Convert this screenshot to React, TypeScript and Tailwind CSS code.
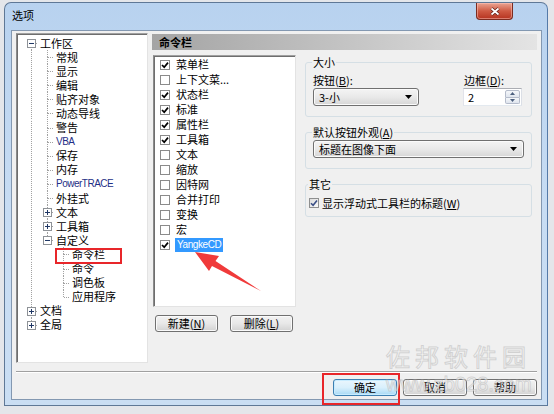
import React from "react";

type TreeRow = {
  label: string;
  rails: boolean[];
  up: boolean;
  down: boolean;
  box?: "plus" | "minus";
  latin?: boolean;
};

const leaf = (label: string, latin = false): TreeRow => ({ label, rails: [true], up: true, down: true, latin });
const sub = (label: string, last = false): TreeRow => ({ label, rails: [true, false], up: true, down: !last });

const treeRows: TreeRow[] = [
  { label: "工作区", rails: [], up: false, down: true, box: "minus" },
  leaf("常规"),
  leaf("显示"),
  leaf("编辑"),
  leaf("贴齐对象"),
  leaf("动态导线"),
  leaf("警告"),
  leaf("VBA", true),
  leaf("保存"),
  leaf("内存"),
  leaf("PowerTRACE", true),
  leaf("外挂式"),
  { label: "文本", rails: [true], up: true, down: true, box: "plus" },
  { label: "工具箱", rails: [true], up: true, down: true, box: "plus" },
  { label: "自定义", rails: [true], up: true, down: false, box: "minus" },
  sub("命令栏"),
  sub("命令"),
  sub("调色板"),
  sub("应用程序", true),
  { label: "文档", rails: [], up: true, down: true, box: "plus" },
  { label: "全局", rails: [], up: true, down: false, box: "plus" },
];

const toolbars: { label: string; on: boolean }[] = [
  { label: "菜单栏", on: true },
  { label: "上下文菜...", on: false },
  { label: "状态栏", on: true },
  { label: "标准", on: true },
  { label: "属性栏", on: true },
  { label: "工具箱", on: true },
  { label: "文本", on: false },
  { label: "缩放", on: false },
  { label: "因特网", on: false },
  { label: "合并打印", on: false },
  { label: "变换", on: false },
  { label: "宏", on: false },
];

const DOT = "#a0a0a0";

// one column of the tree's dotted guide lines
function Rail({ on }: { on: boolean }) {
  return (
    <svg width="16" height="14.1" viewBox="0 0 16 14.1" className="shrink-0">
      {on && <line x1="8.5" y1="0" x2="8.5" y2="14.1" stroke={DOT} strokeDasharray="1 1" />}
    </svg>
  );
}

function Guide({ up, down, box }: { up: boolean; down: boolean; box?: "plus" | "minus" }) {
  return (
    <svg width="16" height="14.1" viewBox="0 0 16 14.1" className="shrink-0">
      {up && <line x1="8.5" y1="0" x2="8.5" y2="7" stroke={DOT} strokeDasharray="1 1" />}
      {down && <line x1="8.5" y1="7" x2="8.5" y2="14.1" stroke={DOT} strokeDasharray="1 1" />}
      <line x1="9" y1="7.5" x2="15" y2="7.5" stroke={DOT} strokeDasharray="1 1" />
      {box && (
        <g>
          <rect x="4.5" y="3.5" width="8" height="8" fill="#fff" stroke="#8e9297" />
          <line x1="6" y1="7.5" x2="11" y2="7.5" stroke="#1d3563" />
          {box === "plus" && <line x1="8.5" y1="5" x2="8.5" y2="10" stroke="#1d3563" />}
        </g>
      )}
    </svg>
  );
}

function Tree() {
  return (
    <div className="w-[132px] h-[330px] shrink-0 bg-white border border-t-[#a0a0a0] border-l-[#8a8a8a] border-r-[#e3e3e3] border-b-[#e3e3e3] shadow-[inset_1px_1px_0_#6e6e6e] pt-[2px] pl-[6px]">
      {treeRows.map((r, i) => (
        <div key={i} className="flex items-center h-[14.1px] leading-[13px]">
          {r.rails.map((on, j) => (
            <Rail key={j} on={on} />
          ))}
          <Guide up={r.up} down={r.down} box={r.box} />
          {r.latin ? (
            <span className="pl-[1px] font-['Liberation_Sans',sans-serif] text-[10px] leading-[12px] tracking-[-0.5px] text-[#1f2f86]">
              {r.label}
            </span>
          ) : (
            <span className="pl-[1px] leading-[13px]">{r.label}</span>
          )}
        </div>
      ))}
    </div>
  );
}

function ListCheck({ on }: { on: boolean }) {
  return (
    <span className="w-[10px] h-[10px] shrink-0 border border-[#8b8b8b] bg-white flex items-center justify-center">
      {on && (
        <svg width="8" height="8" viewBox="0 0 8 8">
          <path d="M1 4 L3.2 6.2 L7 1.6" fill="none" stroke="#000" strokeWidth="1.7" />
        </svg>
      )}
    </span>
  );
}

function Combo({ value, width }: { value: string; width: string }) {
  return (
    <div
      className={`${width} h-[18px] flex items-center justify-between rounded-[3px] border border-[#707070] bg-linear-to-b from-[#f4f4f4] via-[#e9e9e9] to-[#d6d6d6] pl-[5px] pr-[6px] shadow-[inset_0_0_0_1px_#fbfbfb]`}
    >
      <span className="leading-[14px]">{value}</span>
      <svg width="7" height="4" viewBox="0 0 7 4">
        <path d="M0 0h7L3.5 4z" fill="#000" />
      </svg>
    </div>
  );
}

function Btn({ children, width, primary = false }: { children: React.ReactNode; width: string; primary?: boolean }) {
  return (
    <div
      className={
        primary
          ? `${width} h-[17px] flex items-center justify-center rounded-[3px] border border-[#3c7fb1] bg-linear-to-b from-[#eaf6fd] via-[#d9f0fc] to-[#a7d9f5] shadow-[inset_0_0_0_1px_#c8ecff] leading-[13px]`
          : `${width} h-[17px] flex items-center justify-center rounded-[3px] border border-[#707070] bg-linear-to-b from-[#f2f2f2] via-[#e8e8e8] to-[#d2d2d2] shadow-[inset_0_0_0_1px_#fafafa] leading-[13px]`
      }
    >
      {children}
    </div>
  );
}

export default function App() {
  return (
    <div className="relative w-[554px] h-[414px] overflow-hidden bg-[#e4e6ea] pl-[4px] pt-[2px] font-['Noto_Sans_CJK_SC',sans-serif] text-[11px] text-black">
      {/* window frame */}
      <div className="w-[544px] h-[404px] rounded-t-[7px] border border-[#5f7896] border-r-[#557aa8] bg-linear-to-b from-[#b8d2ef] via-[#c7dcf3] to-[#cadef3] flex flex-col">
        <div className="h-[27px] flex items-start">
          <span className="pl-[7px] pt-[5px] leading-[14px]">选项</span>
          <div className="ml-auto mr-[34px] w-[37px] h-[17px] rounded-b-[4px] border border-t-0 border-[#7b2c20] bg-linear-to-b from-[#e9a493] via-[#cf5a43] to-[#b5321f] flex items-center justify-center shadow-[inset_0_0_0_1px_rgba(255,200,190,0.5)]">
            <svg width="10" height="9" viewBox="0 0 10 9">
              <path d="M1.5 1.5 L8.5 7.5 M8.5 1.5 L1.5 7.5" stroke="#5a1a10" strokeWidth="3.2" />
              <path d="M1.5 1.5 L8.5 7.5 M8.5 1.5 L1.5 7.5" stroke="#fff" strokeWidth="1.8" />
            </svg>
          </div>
        </div>

        {/* client area */}
        <div className="ml-[6px] mr-[5px] h-[370px] border border-[#8398b1] bg-[#f0f0f0] flex flex-col pt-[2px] px-[4px]">
          <div className="flex h-[330px]">
            <Tree />

            <div className="ml-[4px] flex-1 flex flex-col">
              <div className="mt-[1px] h-[16px] bg-linear-to-r from-[#a4a4a4] to-[#e4e4e4] pl-[7px] font-bold leading-[16px]">
                命令栏
              </div>

              <div className="mt-[5px] flex">
                {/* toolbar list */}
                <div className="ml-[1px] w-[143px] flex flex-col">
                  <div className="h-[252px] bg-white border border-t-[#a0a0a0] border-l-[#8a8a8a] border-r-[#e3e3e3] border-b-[#e3e3e3] shadow-[inset_1px_1px_0_#6e6e6e] pt-[1px] pl-[6px]">
                    {toolbars.map((t) => (
                      <div key={t.label} className="h-[15px] flex items-center gap-[6px]">
                        <ListCheck on={t.on} />
                        <span className="leading-[13px]">{t.label}</span>
                      </div>
                    ))}
                    <div className="h-[15px] flex items-center gap-[5px]">
                      <ListCheck on />
                      <span className="bg-[#3399ff] text-white px-[2px] h-[14px] leading-[14px] font-['Liberation_Sans',sans-serif] text-[10px] tracking-[-0.4px]">
                        YangkeCD
                      </span>
                    </div>
                  </div>
                  <div className="mt-[8px] flex gap-[12px] pl-[2px]">
                    <Btn width="w-[63px]">
                      新建(<span className="underline">N</span>)
                    </Btn>
                    <Btn width="w-[63px]">
                      删除(<span className="underline">L</span>)
                    </Btn>
                  </div>
                </div>

                {/* options */}
                <div className="ml-[9px] w-[227px] flex flex-col">
                  <fieldset className="border border-[#d5dfe5] rounded-[3px] px-[6px] pb-[10px]">
                    <legend className="px-[1px] leading-[14px]">大小</legend>
                    <div className="mt-[5px] flex">
                      <div className="flex flex-col">
                        <span className="leading-[12px] pl-[1px]">
                          按钮(<span className="underline">B</span>):
                        </span>
                        <div className="mt-[2px] ml-[1px]">
                          <Combo value="3-小" width="w-[106px]" />
                        </div>
                      </div>
                      <div className="ml-auto mr-[3px] flex flex-col">
                        <span className="leading-[12px] pl-[1px]">
                          边框(<span className="underline">D</span>):
                        </span>
                        <div className="mt-[2px] w-[59px] h-[18px] border border-[#abadb3] border-l-[#e2e3ea] border-r-[#dbdfe6] border-b-[#e3e9ef] bg-white flex items-center justify-between pl-[4px] pr-[1px]">
                          <span className="leading-[14px]">2</span>
                          <div className="flex flex-col w-[15px] h-[14px]">
                            <div className="flex-1 border border-[#b5bccb] rounded-t-[2px] bg-linear-to-b from-[#f5f7fa] to-[#dfe5ee] flex items-center justify-center">
                              <svg width="5" height="3" viewBox="0 0 5 3">
                                <path d="M2.5 0L5 3H0z" fill="#4b5f7e" />
                              </svg>
                            </div>
                            <div className="flex-1 border border-t-0 border-[#b5bccb] rounded-b-[2px] bg-linear-to-b from-[#f5f7fa] to-[#dfe5ee] flex items-center justify-center">
                              <svg width="5" height="3" viewBox="0 0 5 3">
                                <path d="M0 0h5L2.5 3z" fill="#4b5f7e" />
                              </svg>
                            </div>
                          </div>
                        </div>
                      </div>
                    </div>
                  </fieldset>

                  <fieldset className="mt-[8px] border border-[#d5dfe5] rounded-[3px] px-[6px] pb-[10px]">
                    <legend className="px-[1px] leading-[14px]">
                      默认按钮外观(<span className="underline">A</span>)
                    </legend>
                    <div className="mt-[1px] ml-[1px]">
                      <Combo value="标题在图像下面" width="w-[211px]" />
                    </div>
                  </fieldset>

                  <fieldset className="mt-[8px] border border-[#d5dfe5] rounded-[3px] px-[2px] pb-[6px]">
                    <legend className="px-[1px] leading-[14px]">其它</legend>
                    <div className="mt-[5px] h-[14px] flex items-center gap-[3px] pl-[1px]">
                      <span className="w-[10px] h-[10px] border border-[#8e8f8f] bg-linear-to-br from-[#dcdcdc] to-[#fafafa] flex items-center justify-center">
                        <svg width="8" height="8" viewBox="0 0 8 8">
                          <path d="M1 4.2 L3.1 6.3 L7 1.5" fill="none" stroke="#3b4f86" strokeWidth="1.6" />
                        </svg>
                      </span>
                      <span className="leading-[13px]">
                        显示浮动式工具栏的标题(<span className="underline">W</span>)
                      </span>
                    </div>
                  </fieldset>
                </div>
              </div>
            </div>
          </div>

          <div className="mt-[8px] border-t border-b border-t-[#a0a0a0] border-b-white" />

          <div className="mt-[6px] flex justify-end gap-[6px]">
            <Btn width="w-[64px]" primary>
              确定
            </Btn>
            <Btn width="w-[64px]">取消</Btn>
            <Btn width="w-[64px]">帮助</Btn>
          </div>
        </div>
      </div>

      {/* annotation marks */}
      <div className="absolute left-[55px] top-[248px] w-[67px] h-[16px] border-2 border-[#e8262a]" />
      <div className="absolute left-[322px] top-[373px] w-[78px] h-[32px] border-2 border-[#e8262a]" />
      <svg className="absolute left-0 top-0 pointer-events-none" width="554" height="414" viewBox="0 0 554 414">
        <polygon points="195,252 219,256 215.5,261 261,291 212,266 209,271" fill="#f03a3a" />
      </svg>

      {/* site watermark */}
      <div className="absolute left-[386px] top-[342px] pointer-events-none flex flex-col">
        <span className="text-[24px] leading-[28px] tracking-[5px] text-[rgba(255,255,255,0.55)] [-webkit-text-stroke:1px_rgba(175,175,175,0.5)]">
          佐邦软件园
        </span>
        <span className="mt-[4px] font-['Liberation_Sans',sans-serif] text-[20px] leading-[20px] text-[rgba(255,255,255,0.5)] [-webkit-text-stroke:1px_rgba(170,170,170,0.45)]">
          www.zb028.com
        </span>
      </div>
    </div>
  );
}
